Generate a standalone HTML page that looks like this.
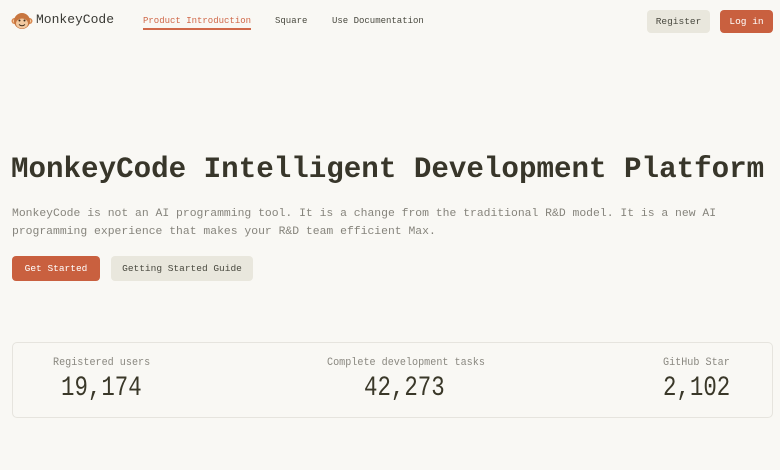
<!DOCTYPE html>
<html><head><meta charset="utf-8"><style>
*{margin:0;padding:0;box-sizing:border-box}
body{width:780px;height:470px;background:#f9f8f4;font-family:"Liberation Mono",monospace;position:relative;overflow:hidden;color:#3a3829}
.a{position:absolute;white-space:nowrap}
.nav{font-size:9px;color:#4a4a40;top:16px}
.btn{position:absolute;border-radius:4px;font-size:9.5px;display:flex;align-items:center;justify-content:center}
.lab{font-size:11px;color:#8a8880;top:357px;transform:scaleX(0.92);transform-origin:left top}
.num{font-size:28px;color:#3a3829;top:373px;transform:scaleX(0.8);transform-origin:left top}
</style></head><body>
<svg class="a" style="left:11px;top:11px" width="22" height="20" viewBox="0 0 22 20">
<circle cx="3.5" cy="10" r="3" fill="#d9884f"/><circle cx="18.5" cy="10" r="3" fill="#d9884f"/>
<circle cx="3.5" cy="10" r="1.6" fill="#f2c9a0"/><circle cx="18.5" cy="10" r="1.6" fill="#f2c9a0"/>
<circle cx="11" cy="10" r="8" fill="#c8763f"/>
<ellipse cx="11" cy="12.5" rx="6" ry="5" fill="#f2c9a0"/>
<circle cx="8.5" cy="9.5" r="1" fill="#3a2a1a"/><circle cx="13.5" cy="9.5" r="1" fill="#3a2a1a"/>
<path d="M8 13.5q3 2.5 6 0" stroke="#3a2a1a" stroke-width="1" fill="none"/>
</svg>
<div class="a" style="left:36px;top:12px;font-size:13px;color:#3a3a35">MonkeyCode</div>
<div class="a nav" style="left:143px;color:#d0694a;border-bottom:2px solid #d0694a;padding-bottom:2px">Product Introduction</div>
<div class="a nav" style="left:275px">Square</div>
<div class="a nav" style="left:332px">Use Documentation</div>
<div class="btn" style="left:647px;top:10px;width:63px;height:23px;background:#e9e7dd;color:#4a4a40">Register</div>
<div class="btn" style="left:720px;top:10px;width:53px;height:23px;background:#c9603f;color:#fff">Log in</div>
<div class="a" style="left:11px;top:153px;font-size:29.2px;font-weight:bold;color:#38362a">MonkeyCode Intelligent Development Platform</div>
<div class="a" style="left:12px;top:205px;font-size:11.4px;line-height:18px;color:#86847c">MonkeyCode is not an AI programming tool. It is a change from the traditional R&amp;D model. It is a new AI<br>programming experience that makes your R&amp;D team efficient Max.</div>
<div class="btn" style="left:12px;top:256px;width:88px;height:25px;background:#c9603f;color:#fff">Get Started</div>
<div class="btn" style="left:111px;top:256px;width:142px;height:25px;background:#e9e7dd;color:#4a4a40">Getting Started Guide</div>
<div class="a" style="left:12px;top:342px;width:761px;height:76px;border:1px solid #e6e4de;border-radius:5px"></div>
<div class="a lab" style="left:53px">Registered users</div>
<div class="a num" style="left:61px">19,174</div>
<div class="a lab" style="left:327px">Complete development tasks</div>
<div class="a num" style="left:364px">42,273</div>
<div class="a lab" style="left:663px">GitHub Star</div>
<div class="a num" style="left:663px">2,102</div>
</body></html>
